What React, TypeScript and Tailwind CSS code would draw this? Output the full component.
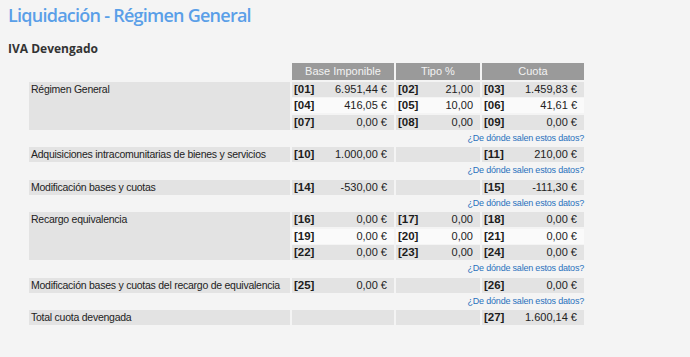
import React from 'react';

type Cell = { code: string; value: string } | null;

interface DataRow {
  label?: string;
  span?: number;
  cells: [Cell, Cell, Cell];
  light?: boolean;
}

const groups: { rows: DataRow[]; link: boolean }[] = [
  {
    link: true,
    rows: [
      {
        label: 'Régimen General',
        span: 3,
        cells: [
          { code: '[01]', value: '6.951,44 €' },
          { code: '[02]', value: '21,00' },
          { code: '[03]', value: '1.459,83 €' },
        ],
      },
      {
        light: true,
        cells: [
          { code: '[04]', value: '416,05 €' },
          { code: '[05]', value: '10,00' },
          { code: '[06]', value: '41,61 €' },
        ],
      },
      {
        cells: [
          { code: '[07]', value: '0,00 €' },
          { code: '[08]', value: '0,00' },
          { code: '[09]', value: '0,00 €' },
        ],
      },
    ],
  },
  {
    link: true,
    rows: [
      {
        label: 'Adquisiciones intracomunitarias de bienes y servicios',
        cells: [{ code: '[10]', value: '1.000,00 €' }, null, { code: '[11]', value: '210,00 €' }],
      },
    ],
  },
  {
    link: true,
    rows: [
      {
        label: 'Modificación bases y cuotas',
        cells: [{ code: '[14]', value: '-530,00 €' }, null, { code: '[15]', value: '-111,30 €' }],
      },
    ],
  },
  {
    link: true,
    rows: [
      {
        label: 'Recargo equivalencia',
        span: 3,
        cells: [
          { code: '[16]', value: '0,00 €' },
          { code: '[17]', value: '0,00' },
          { code: '[18]', value: '0,00 €' },
        ],
      },
      {
        light: true,
        cells: [
          { code: '[19]', value: '0,00 €' },
          { code: '[20]', value: '0,00' },
          { code: '[21]', value: '0,00 €' },
        ],
      },
      {
        cells: [
          { code: '[22]', value: '0,00 €' },
          { code: '[23]', value: '0,00' },
          { code: '[24]', value: '0,00 €' },
        ],
      },
    ],
  },
  {
    link: true,
    rows: [
      {
        label: 'Modificación bases y cuotas del recargo de equivalencia',
        cells: [{ code: '[25]', value: '0,00 €' }, null, { code: '[26]', value: '0,00 €' }],
      },
    ],
  },
  {
    link: false,
    rows: [
      {
        label: 'Total cuota devengada',
        cells: [null, null, { code: '[27]', value: '1.600,14 €' }],
      },
    ],
  },
];

function ValueCell({ cell, light }: { cell: Cell; light?: boolean }) {
  return (
    <div
      className={`h-[15px] flex items-center justify-between pl-[2px] pr-[7px] ${
        light ? 'bg-[#fafafa]' : 'bg-[#e3e3e3]'
      }`}
    >
      {cell && (
        <>
          <span className="font-bold text-[11.5px] text-[#1c1c1c]">{cell.code}</span>
          <span className="text-[#222]">{cell.value}</span>
        </>
      )}
    </div>
  );
}

export default function App() {
  return (
    <div className="min-h-screen w-full bg-[#f4f4f4] px-[8px] pt-[2px]">
      <h1 className="font-['Open_Sans',sans-serif] font-semibold text-[18px] tracking-[-0.75px] leading-[26px] text-[#5a9fe8]">
        Liquidación - Régimen General
      </h1>
      <h2 className="mt-[13px] font-['Open_Sans',sans-serif] font-bold text-[12px] leading-[16px] text-[#333]">
        IVA Devengado
      </h2>

      <div className="mt-[6px] ml-[21px] grid grid-cols-[261px_102px_84px_102px] gap-x-[2px] gap-y-[1.3px] font-['Liberation_Sans',Arial,sans-serif] text-[11px] leading-[15px]">
        {/* Header */}
        <div />
        {['Base Imponible', 'Tipo %', 'Cuota'].map((h) => (
          <div
            key={h}
            className="h-[17px] mb-[0.7px] bg-[#9a9a9a] text-[#f2f2f2] flex items-center justify-center"
          >
            {h}
          </div>
        ))}

        {groups.map((g, gi) => (
          <React.Fragment key={gi}>
            {g.rows.map((r, ri) => (
              <React.Fragment key={ri}>
                {r.label && (
                  <div
                    className={`bg-[#e3e3e3] pl-[2px] whitespace-nowrap text-[10.5px] tracking-[-0.25px] text-[#222] ${
                      r.span === 3 ? 'row-span-3' : 'h-[15px]'
                    }`}
                  >
                    {r.label}
                  </div>
                )}
                {r.cells.map((c, ci) => (
                  <ValueCell key={ci} cell={c} light={r.light} />
                ))}
              </React.Fragment>
            ))}
            {g.link && (
              <div className="col-span-4 h-[15px] flex items-center justify-end text-[9px] tracking-[-0.2px] text-[#2a72bd]">
                ¿De dónde salen estos datos?
              </div>
            )}
          </React.Fragment>
        ))}
      </div>
    </div>
  );
}
